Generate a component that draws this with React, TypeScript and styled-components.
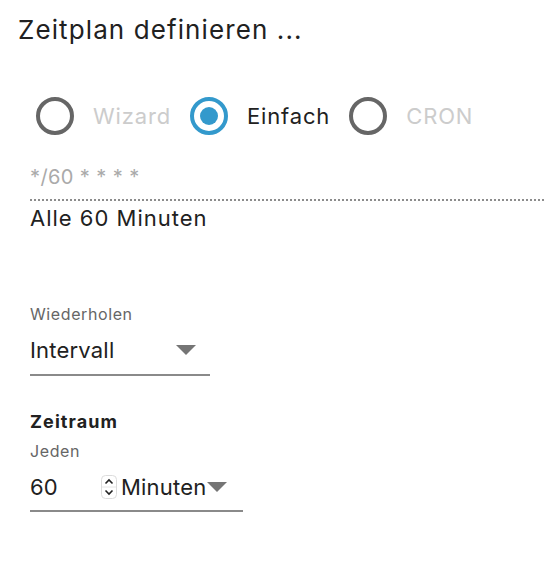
import styled, { createGlobalStyle } from 'styled-components';

const GlobalStyle = createGlobalStyle`
  html, body {
    margin: 0;
    padding: 0;
    background: #ffffff;
  }
  body {
    font-family: Inter, "Liberation Sans", Arial, sans-serif;
    color: #212121;
  }
`;

const Page = styled.div`
  width: 544px;
  min-height: 566px;
  padding-top: 14px;
  box-sizing: border-box;
`;

const Title = styled.h1`
  margin: 0 0 0 18px;
  font-size: 26px;
  line-height: 32px;
  font-weight: 400;
  letter-spacing: 1.1px;
`;

const Body = styled.div`
  padding-left: 30px;
  display: flex;
  flex-direction: column;
`;

const RadioGroup = styled.div`
  display: flex;
  align-items: center;
  margin: 51px 0 0 6px;
  height: 38px;
`;

const RadioOption = styled.label`
  display: flex;
  align-items: center;
  gap: 19px;
  margin-right: 19px;
  cursor: pointer;
`;

const RadioCircle = styled.span<{ $checked?: boolean }>`
  width: 38px;
  height: 38px;
  box-sizing: border-box;
  border-radius: 50%;
  border: 4px solid ${p => (p.$checked ? '#3399cc' : '#666666')};
  display: flex;
  align-items: center;
  justify-content: center;
  &::after {
    content: '';
    width: 18px;
    height: 18px;
    border-radius: 50%;
    background: #3399cc;
    display: ${p => (p.$checked ? 'block' : 'none')};
  }
`;

const RadioLabel = styled.span<{ $muted?: boolean }>`
  font-size: 22px;
  line-height: 26px;
  letter-spacing: 0.85px;
  color: ${p => (p.$muted ? '#cccccc' : '#212121')};
`;

const CronText = styled.div`
  margin-top: 30px;
  font-size: 20px;
  line-height: 24px;
  letter-spacing: 0.4px;
  color: #aaaaaa;
  padding-bottom: 10px;
  border-bottom: 2px dotted #8c8c8c;
`;

const Summary = styled.div`
  margin-top: 4px;
  font-size: 22px;
  line-height: 26px;
  letter-spacing: 1px;
`;

const FieldLabel = styled.div<{ $top?: number }>`
  margin-top: ${p => p.$top ?? 0}px;
  font-size: 16px;
  line-height: 18px;
  letter-spacing: 0.6px;
  color: #666666;
`;

const SelectBox = styled.div<{ $width: number }>`
  width: ${p => p.$width}px;
  margin-top: 14px;
  display: flex;
  align-items: center;
  font-size: 22px;
  line-height: 26px;
  letter-spacing: 0.2px;
  padding-bottom: 11px;
  border-bottom: 2px solid #8a8a8a;
`;

const SelectValue = styled.span`
  flex: 1;
`;

const CaretSlot = styled.span`
  width: 14px;
  flex: none;
`;

const Caret = styled.svg`
  flex: none;
  width: 20px;
  height: 10px;
`;

const SectionTitle = styled.div`
  margin-top: 36px;
  font-size: 18px;
  line-height: 20px;
  font-weight: 700;
  letter-spacing: 1.1px;
`;

const IntervalRow = styled.div`
  width: 213px;
  margin-top: 14px;
  display: flex;
  align-items: center;
  font-size: 22px;
  line-height: 26px;
  padding-bottom: 10px;
  border-bottom: 2px solid #8a8a8a;
`;

const NumberValue = styled.span`
  width: 71px;
`;

const Spinner = styled.svg`
  flex: none;
  width: 16px;
  height: 24px;
  margin-right: 4px;
`;

const UnitValue = styled.span`
  margin-right: 1px;
  letter-spacing: 0.2px;
`;

function DownCaret() {
  return (
    <Caret viewBox="0 0 20 10">
      <path d="M0 0 H20 L10 10 Z" fill="#757575" />
    </Caret>
  );
}

export default function App() {
  return (
    <>
      <GlobalStyle />
      <Page>
        <Title>Zeitplan definieren ...</Title>
        <Body>
          <RadioGroup>
            <RadioOption>
              <RadioCircle />
              <RadioLabel $muted>Wizard</RadioLabel>
            </RadioOption>
            <RadioOption>
              <RadioCircle $checked />
              <RadioLabel>Einfach</RadioLabel>
            </RadioOption>
            <RadioOption>
              <RadioCircle />
              <RadioLabel $muted>CRON</RadioLabel>
            </RadioOption>
          </RadioGroup>

          <CronText>*/60 * * * *</CronText>
          <Summary>Alle 60 Minuten</Summary>

          <FieldLabel $top={74}>Wiederholen</FieldLabel>
          <SelectBox $width={180}>
            <SelectValue>Intervall</SelectValue>
            <DownCaret />
            <CaretSlot />
          </SelectBox>

          <SectionTitle>Zeitraum</SectionTitle>
          <FieldLabel $top={10}>Jeden</FieldLabel>
          <IntervalRow>
            <NumberValue>60</NumberValue>
            <Spinner viewBox="0 0 16 24">
              <rect x="0.5" y="0.5" width="15" height="23" rx="4" fill="#fff" stroke="#dcdcdc" />
              <line x1="1" y1="12" x2="15" y2="12" stroke="#e6e6e6" />
              <path d="M4.5 8.5 L8 5 L11.5 8.5" fill="none" stroke="#222" strokeWidth="1.6" />
              <path d="M4.5 15.5 L8 19 L11.5 15.5" fill="none" stroke="#222" strokeWidth="1.6" />
            </Spinner>
            <UnitValue>Minuten</UnitValue>
            <DownCaret />
          </IntervalRow>
        </Body>
      </Page>
    </>
  );
}
